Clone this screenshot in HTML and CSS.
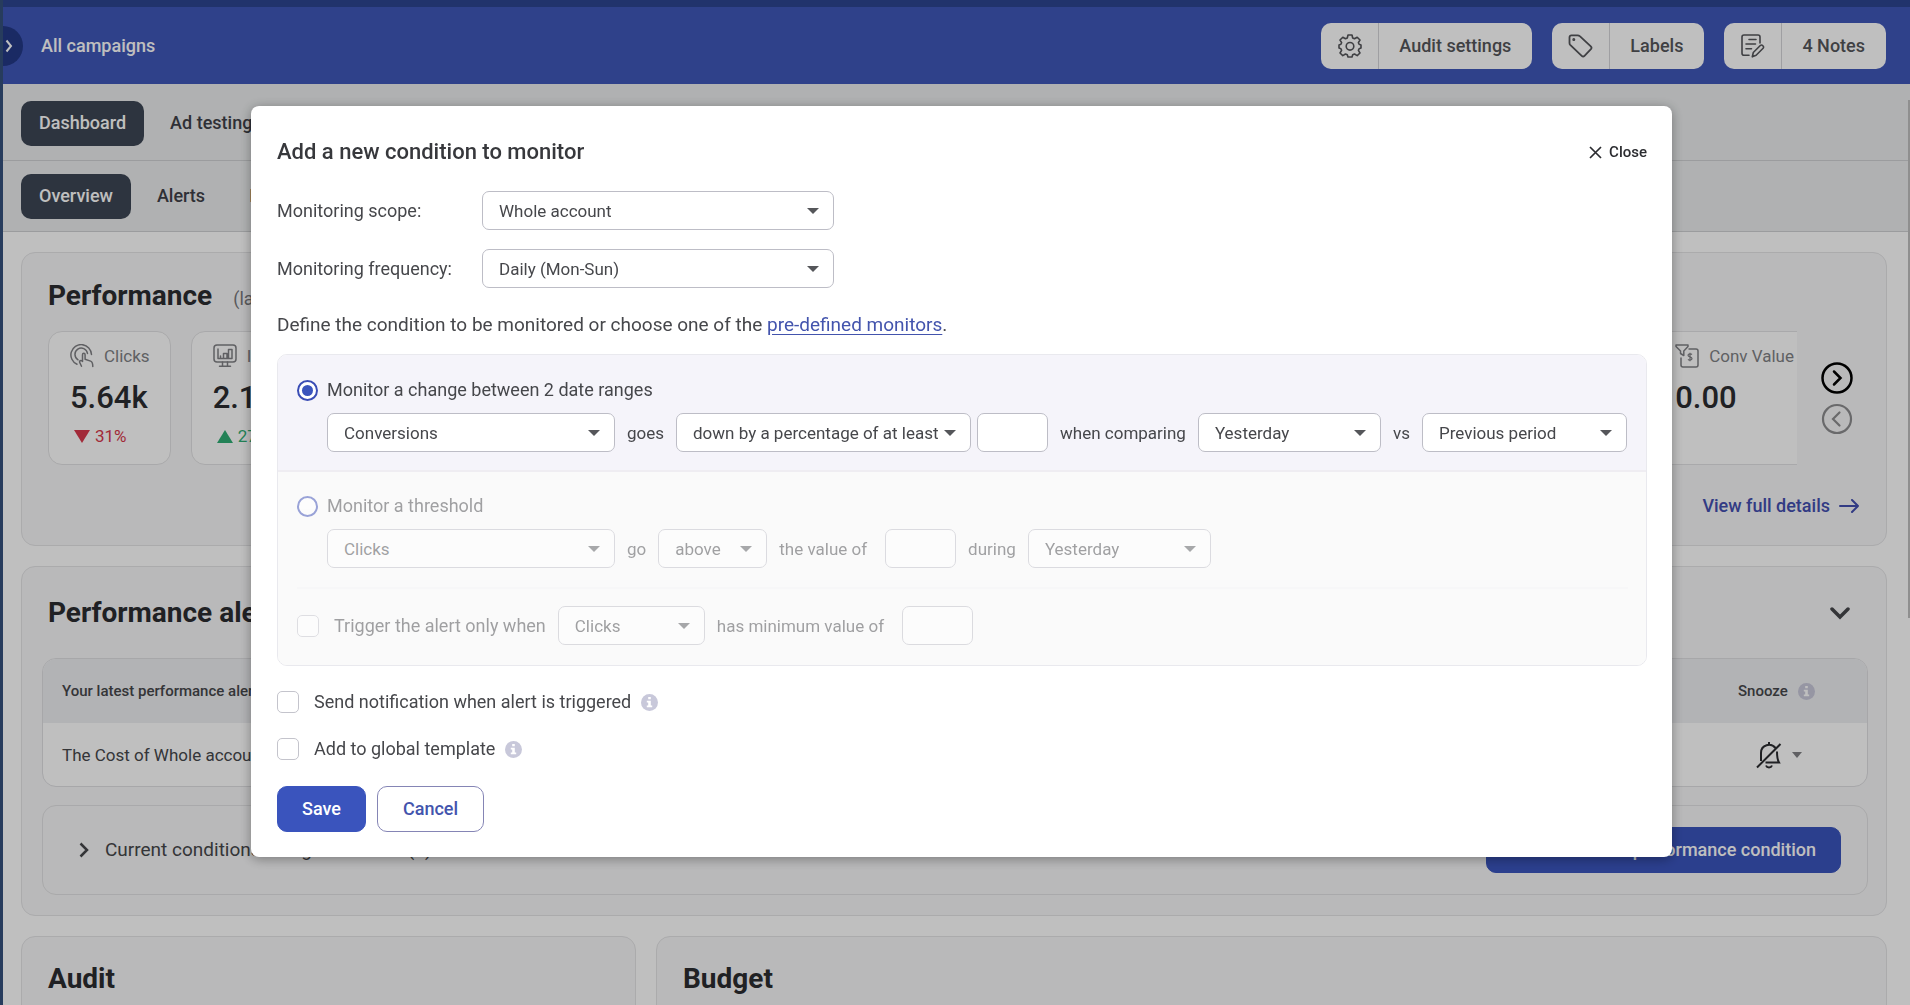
FILE: index.html
```html
<!DOCTYPE html>
<html lang="en">
<head>
<meta charset="utf-8">
<title>All campaigns – Dashboard</title>
<link rel="stylesheet" href="styles.css">
</head>
<body>
<div class="page">
  <header class="topbar">
    <button class="drawer-toggle" aria-label="Open menu">
      <svg width="8" height="14" viewBox="0 0 8 14" fill="none" stroke="currentColor" stroke-width="2"><path d="M1.500 1.500 6 7l-4.500 5.500"/></svg>
    </button>
    <h1 class="topbar-title">All campaigns</h1>
    <div class="topbar-actions">
      <button class="split-button">
        <span class="split-icon">
          <svg width="24" height="24" viewBox="0 0 24 24" fill="none" stroke="currentColor" stroke-width="1.600" stroke-linejoin="round"><path d="M10 1h4l.7 3 1.800.8L19.200 3.200 22 6l-1.600 2.700.7 1.600 1.900.6v3.200l-1.900.6-.7 1.700L22 19l-2.800 2.600-2.700-1.600-1.800.8L14 23h-4l-.7-2.200-1.800-.8-2.700 1.600L2 19l1.600-2.600-.7-1.700-1.900-.6v-3.200l1.900-.6.7-1.600L2 6l2.800-2.800L7.500 4.800 9.300 4z"/><circle cx="12" cy="12.300" r="3.800"/></svg>
        </span>
        <span class="split-label">Audit settings</span>
      </button>
      <button class="split-button">
        <span class="split-icon">
          <svg width="25" height="24" viewBox="0 0 25 24" fill="none" stroke="currentColor" stroke-width="1.800" stroke-linejoin="round"><path d="M1.500 3.200C1.500 2 2.200 1.300 3.400 1.300h6.200c.9 0 1.600.3 2.200.9L22.800 12.400c.9.900.9 1.900.1 2.800l-6.400 6.600c-.9.900-1.900.9-2.800 0L2.200 10.800c-.5-.5-.7-1.100-.7-1.900z"/><circle cx="5.800" cy="5.600" r=".6" fill="currentColor"/></svg>
        </span>
        <span class="split-label">Labels</span>
      </button>
      <button class="split-button">
        <span class="split-icon">
          <svg width="24" height="24" viewBox="0 0 24 24" fill="none" stroke="currentColor" stroke-width="1.600" stroke-linejoin="round" stroke-linecap="round"><path d="M8 21.200H3c-1.200 0-2-.8-2-2V3c0-1.200.8-2 2-2h14c1.200 0 2 .8 2 2v6M8 5.500h7M5 10h9.500M5 14.800h5.500M11.300 22.800l1-4.300 7-7c1.700-1.400 4.200 1 2.800 2.800l-7 7z"/></svg>
        </span>
        <span class="split-label">4 Notes</span>
      </button>
    </div>
  </header>

  <nav class="tabs tabs-main" aria-label="Main">
    <a class="tab tab-active" href="#dashboard">Dashboard</a>
    <a class="tab" href="#testing">Ad testing</a>
  </nav>
  <nav class="tabs tabs-sub" aria-label="Dashboard sections">
    <a class="tab tab-active" href="#overview">Overview</a>
    <a class="tab" href="#alerts">Alerts</a>
    <a class="tab" href="#insights">Insights</a>
  </nav>

  <main class="content">
    <section class="card performance">
      <div class="card-head">
        <h2>Performance</h2>
        <span class="card-note">(last 30 days)</span>
      </div>
      <div class="metrics">
        <div class="metric-list">
          <div class="metric">
            <div class="metric-name">
              <svg width="24" height="24" viewBox="0 0 24 24" fill="none" stroke="currentColor" stroke-width="1.500" stroke-linecap="round" stroke-linejoin="round"><path d="M7 20.300A10.300 10.300 0 1 1 21.500 10.500M8 15.800A6.300 6.300 0 1 1 17.500 9.500M12.500 17.500v-6.800c0-1.900 2.600-1.900 2.600 0v4.600l5.500 1.800c1.600.6 2.200 2.500 2.200 5.400M12.500 17l-1.800-.4c-1.500 0-1.400 1.600-.6 2.600l1.400 3"/></svg>
              Clicks
            </div>
            <div class="metric-value">5.64k</div>
            <div class="metric-change down">31%</div>
          </div>
          <div class="metric">
            <div class="metric-name">
              <svg width="24" height="24" viewBox="0 0 24 24" fill="none" stroke="currentColor" stroke-width="1.500" stroke-linecap="round" stroke-linejoin="round"><rect x="1" y="1" width="22" height="17" rx="3"/><path d="M5 5v9.500M5 14.500h14V5.500h-3.500v9M10.500 14.500v-5h3.500v5M7.500 14.500V12M9.500 18v3.500M14.500 18v3.500M6.500 22.300h11"/></svg>
              Impressions
            </div>
            <div class="metric-value">2.13k</div>
            <div class="metric-change up">27%</div>
          </div>
          <div class="metric metric-fill"></div>
          <div class="metric metric-cut">
            <div class="metric-name">
              <svg width="24" height="24" viewBox="0 0 24 24" fill="none" stroke="currentColor" stroke-width="1.500" stroke-linejoin="round"><path d="M1 1h12v1.500L8.800 7v4.500L5.500 9.500V7L1 2.500zM13.500 5H21c1.200 0 2 .8 2 2v14c0 1.200-.8 2-2 2H8c-1.200 0-2-.8-2-2v-7.500"/><path d="M17 10.500c-1-1-4-1-4 .8 0 2 4 1.200 4 3.200 0 1.900-3 1.900-4 .8M15 8.800v8.500" stroke-width="1.200"/></svg>
              Conv Value
            </div>
            <div class="metric-value">0.00</div>
          </div>
        </div>
        <div class="pager">
          <button class="round-button" aria-label="Next metrics"><svg width="32" height="32" viewBox="0 0 32 32" fill="none" stroke="currentColor" stroke-width="2.500"><circle cx="16" cy="16" r="14.500"/><path d="M13 9.500l6.500 6.500-6.500 6.500" stroke-linecap="round"/></svg></button>
          <button class="round-button" aria-label="Previous metrics" disabled><svg width="32" height="32" viewBox="0 0 32 32" fill="none" stroke="currentColor" stroke-width="2.200"><circle cx="16" cy="16" r="14"/><path d="M18.500 9.500L12 16l6.500 6.500" stroke-linecap="round"/></svg></button>
        </div>
      </div>
      <a class="details-link" href="#details">View full details
        <svg width="20" height="14" viewBox="0 0 20 14" fill="none" stroke="currentColor" stroke-width="2" stroke-linecap="round" stroke-linejoin="round"><path d="M1 7h18M13 1l6 6-6 6"/></svg>
      </a>
    </section>

    <section class="card alerts">
      <div class="card-head alerts-head">
        <h2>Performance alerts</h2>
        <button class="plain-button" aria-label="Collapse"><svg width="20" height="14" viewBox="0 0 20 14" fill="none" stroke="currentColor" stroke-width="3.500" stroke-linecap="round"><path d="M2 3l8 8 8-8"/></svg></button>
      </div>
      <table class="alert-table">
        <thead>
          <tr><th>Your latest performance alerts</th>
            <th class="snooze-col"><span class="snooze">Snooze <svg class="info" width="17" height="17" viewBox="0 0 17 17"><circle cx="8.500" cy="8.500" r="8.500"/><path d="M7.200 3h2.600v2.300H7.200zM5.800 6.800h4v4.700h1.400v1.800H5.800v-1.800h1.400V8.600H5.800z" fill="#fff"/></svg></span></th></tr>
        </thead>
        <tbody>
          <tr><td>The Cost of Whole account</td>
            <td class="snooze-col"><button class="plain-button snooze" aria-label="Snooze alert"><svg width="26" height="28" viewBox="0 0 26 28" fill="none" stroke="currentColor" stroke-width="2"><path d="M13 1v3M19.500 7C15 1.500 5 3.500 5 12v8M9.500 21.500H23c-1.500-2.500-2-4-2-11M1 26.500L24.500 3M10 24.500c1 2.500 5 2.500 6 0"/></svg><span class="caret"></span></button></td></tr>
        </tbody>
      </table>
      <div class="conditions">
        <button class="plain-button conditions-toggle"><svg width="10" height="16" viewBox="0 0 10 16" fill="none" stroke="currentColor" stroke-width="2.500"><path d="M1.500 1.500L8 8l-6.500 6.500"/></svg>Current conditions being monitored (3)</button>
        <button class="button button-primary button-icon"><svg width="22" height="22" viewBox="0 0 22 22" fill="none" stroke="currentColor" stroke-width="2"><path d="M11 4v14M4 11h14"/></svg>Add a new performance condition</button>
      </div>
    </section>

    <div class="lower">
      <section class="card"><h2>Audit</h2></section>
      <section class="card"><h2>Budget</h2></section>
    </div>
  </main>
</div>

<div class="overlay">
  <form class="modal" role="dialog" aria-labelledby="modal-title">
    <div class="modal-head">
      <h2 id="modal-title">Add a new condition to monitor</h2>
      <button type="button" class="plain-button close"><svg width="13" height="13" viewBox="0 0 13 13" fill="none" stroke="currentColor" stroke-width="1.700"><path d="M1 1l11 11M12 1L1 12"/></svg>Close</button>
    </div>
    <div class="field">
      <label for="scope">Monitoring scope:</label>
      <span class="select w-field"><select id="scope"><option>Whole account</option></select></span>
    </div>
    <div class="field">
      <label for="frequency">Monitoring frequency:</label>
      <span class="select w-field"><select id="frequency"><option>Daily (Mon-Sun)</option></select></span>
    </div>
    <p class="intro">Define the condition to be monitored or choose one of the <a href="#predefined">pre-defined monitors</a>.</p>

    <div class="rules">
      <div class="rule rule-on">
        <label class="option"><input type="radio" name="rule" checked>Monitor a change between 2 date ranges</label>
        <div class="rule-row">
          <span class="select w-metric"><select aria-label="Metric"><option>Conversions</option></select></span>
          <span class="word">goes</span>
          <span class="select w-direction"><select aria-label="Direction"><option>down by a percentage of at least</option></select></span>
          <input class="amount amount-near" type="text" aria-label="Percentage">
          <span class="word">when comparing</span>
          <span class="select w-day"><select aria-label="First range"><option>Yesterday</option></select></span>
          <span class="word">vs</span>
          <span class="select w-period"><select aria-label="Second range"><option>Previous period</option></select></span>
        </div>
      </div>
      <div class="rule rule-off">
        <label class="option"><input type="radio" name="rule">Monitor a threshold</label>
        <div class="rule-row">
          <span class="select w-metric"><select aria-label="Threshold metric"><option>Clicks</option></select></span>
          <span class="word">go</span>
          <span class="select w-side"><select aria-label="Side"><option>above</option></select></span>
          <span class="word">the value of</span>
          <input class="amount amount-far" type="text" aria-label="Threshold value">
          <span class="word">during</span>
          <span class="select w-day"><select aria-label="Range"><option>Yesterday</option></select></span>
        </div>
        <hr>
        <div class="trigger-row">
          <label class="trigger-label"><input class="check" type="checkbox">Trigger the alert only when</label>
          <span class="select w-trigger"><select aria-label="Trigger metric"><option>Clicks</option></select></span>
          <span class="word">has minimum value of</span>
          <input class="amount amount-far" type="text" aria-label="Minimum value">
        </div>
      </div>
    </div>

    <div class="check-row">
      <label><input class="check" type="checkbox">Send notification when alert is triggered</label>
      <svg class="info" width="17" height="17" viewBox="0 0 17 17"><circle cx="8.500" cy="8.500" r="8.500"/><path d="M7.200 3h2.600v2.300H7.200zM5.800 6.800h4v4.700h1.400v1.800H5.800v-1.800h1.400V8.600H5.800z" fill="#fff"/></svg>
    </div>
    <div class="check-row">
      <label><input class="check" type="checkbox">Add to global template</label>
      <svg class="info" width="17" height="17" viewBox="0 0 17 17"><circle cx="8.500" cy="8.500" r="8.500"/><path d="M7.200 3h2.600v2.300H7.200zM5.800 6.800h4v4.700h1.400v1.800H5.800v-1.800h1.400V8.600H5.800z" fill="#fff"/></svg>
    </div>
    <div class="modal-actions">
      <button type="submit" class="button button-primary">Save</button>
      <button type="button" class="button button-outline">Cancel</button>
    </div>
  </form>
</div>
</body>
</html>
```

FILE: styles.css
```css
* { box-sizing: border-box; }

html { overflow: hidden; height: 100%; }

body {
  margin: 0;
  height: 100%;
  overflow: hidden;
  font-family: Roboto, "Liberation Sans", sans-serif;
  font-size: 18px;
  line-height: 22px;
  color: #46474b;
}

h1, h2, p { margin: 0; }

button, input, select { font: inherit; color: inherit; margin: 0; }

button { cursor: pointer; }

svg { display: block; flex: none; }

.plain-button {
  display: flex;
  align-items: center;
  padding: 0;
  border: 0;
  background: none;
}

.page {
  height: 100%;
  overflow: hidden;
  border-left: 3px solid #35507c;
  background: #fff;
}

/* Top bar */
.topbar {
  display: flex;
  align-items: center;
  height: 84px;
  padding: 7px 24px 0 0;
  background: linear-gradient(#2d4590 7px, #3f57b9 7px);
}

.drawer-toggle {
  display: flex;
  align-items: center;
  width: 20px;
  height: 40px;
  padding: 0 0 0 2px;
  border: 0;
  border-radius: 0 20px 20px 0;
  background: #233886;
  color: #fff;
}

.topbar-title {
  margin-left: 18px;
  font-size: 18px;
  font-weight: 500;
  color: #fff;
}

.topbar-actions {
  display: flex;
  gap: 20px;
  margin-left: auto;
}

.split-button {
  display: flex;
  align-items: stretch;
  height: 46px;
  padding: 0;
  border: 0;
  border-radius: 10px;
  background: #fff;
  color: #55565a;
  font-weight: 500;
}

.split-icon {
  display: flex;
  align-items: center;
  justify-content: center;
  width: 58px;
  border-right: 1px solid #d5d5d8;
}

.split-label {
  align-self: center;
  padding: 0 21px 0 20px;
}

/* Tabs */
.tabs {
  display: flex;
  align-items: center;
  gap: 8px;
  padding: 0 18px;
  background: #ebedee;
  border-bottom: 1px solid #cfd1d3;
}

.tabs-main { height: 77px; padding-top: 2px; }
.tabs-sub { height: 71px; }

.tab {
  padding: 11px 18px 12px;
  border-radius: 10px;
  color: #3f4148;
  font-weight: 500;
  text-decoration: none;
}

.tab-active { background: #3d4654; color: #fff; }

/* Cards */
.content {
  display: grid;
  gap: 20px;
  padding: 20px 23px 0 18px;
}

.card {
  border: 1px solid #e4e4e6;
  border-radius: 14px;
  background: #f7f7f8;
}

.card h2 {
  font-size: 28px;
  line-height: 32px;
  font-weight: 700;
  color: #2b2c30;
}

.card-head {
  display: flex;
  align-items: baseline;
  gap: 21px;
}

.card-note { color: #77787c; }

.performance { height: 294px; padding: 27px 26px; }

.metrics {
  display: flex;
  align-items: center;
  margin-top: 19px;
}

.metric-list {
  display: flex;
  flex: 1;
  gap: 20px;
  overflow: hidden;
}

.metric {
  height: 134px;
  padding: 12px 20px 0 21px;
  border: 1px solid #e2e2e4;
  border-radius: 14px;
  background: #fff;
  white-space: nowrap;
}

.metric-fill { flex: 1; }

.metric-cut {
  padding-right: 3px;
  border-right: 0;
  border-radius: 14px 0 0 14px;
}

.metric-name {
  display: flex;
  align-items: center;
  gap: 10px;
  font-size: 17px;
  color: #808185;
}

.metric-value {
  margin-top: 14px;
  font-size: 31px;
  line-height: 32px;
  font-weight: 500;
  color: #2b2c30;
}

.metric-change {
  display: flex;
  align-items: center;
  gap: 5px;
  margin: 11px 0 0 4px;
  font-size: 17px;
}

.metric-change::before {
  content: "";
  border: 8px solid transparent;
  border-width: 0 8px;
}

.down { color: #d8394c; }
.down::before { border-top: 13px solid #d8394c; }
.up { color: #2fae74; }
.up::before { border-bottom: 13px solid #2fae74; }

.pager {
  display: grid;
  gap: 9px;
  margin: 0 7px 0 24px;
}

.round-button {
  padding: 0;
  border: 0;
  background: none;
  color: #000;
}

.round-button:disabled { color: #8d8d8f; }

.details-link {
  display: flex;
  align-items: center;
  gap: 9px;
  width: max-content;
  margin: 30px 1px 0 auto;
  color: #434fb0;
  font-weight: 500;
  text-decoration: none;
}

.alerts { padding: 30px 18px 20px 20px; }

.alerts-head {
  align-items: center;
  justify-content: space-between;
  padding: 0 18px 0 6px;
}

.alert-table {
  width: 100%;
  margin-top: 29px;
  border: 1px solid #dfdfe2;
  border-radius: 14px;
  border-spacing: 0;
  background: #fff;
  text-align: left;
  overflow: hidden;
}

.alert-table th {
  height: 64px;
  padding: 0 19px;
  background: #eeeff2;
  font-size: 15px;
  font-weight: 500;
}

.alert-table td { height: 63px; padding: 0 19px; font-size: 17px; }

.alert-table .snooze-col { width: 148px; }

.snooze { display: flex; align-items: center; gap: 10px; }

td .snooze { margin: 0 0 0 18px; color: #2b2c30; }

.caret {
  border: 5px solid transparent;
  border-top: 6px solid #808185;
  border-bottom: 0;
}

.conditions {
  display: flex;
  align-items: center;
  justify-content: space-between;
  height: 90px;
  margin-top: 18px;
  padding: 0 26px 0 36px;
  border: 1px solid #e2e2e4;
  border-radius: 14px;
}

.conditions-toggle { gap: 16px; font-size: 19px; }

.lower {
  display: grid;
  grid-template-columns: 615px 1fr;
  gap: 20px;
}

.lower .card {
  height: 300px;
  padding: 26px;
}

/* Buttons */
.button {
  height: 46px;
  padding: 0 24px;
  border: 1px solid #3a54bd;
  border-radius: 10px;
  font-weight: 500;
}

.button-primary { background: #3a54bd; color: #fff; }

.button-outline { padding: 0 25px; background: #fff; border-color: #8585b5; color: #4354ad; }

.button-icon { display: flex; align-items: center; gap: 11px; }

/* Modal */
.overlay {
  position: fixed;
  inset: 0;
  padding: 106px 238px 0 251px;
  background: rgba(0, 0, 0, .25);
}

/* Thin page scrollbar */
.overlay::after {
  content: "";
  position: absolute;
  top: 100px;
  right: 0;
  width: 2px;
  height: 518px;
  background: #8f8f8f;
}

.modal {
  padding: 33px 25px 25px 26px;
  border-radius: 8px;
  background: #fff;
  box-shadow: 0 2px 12px rgba(0, 0, 0, .35);
}

.modal-head {
  display: flex;
  align-items: center;
  justify-content: space-between;
  margin-bottom: 26px;
}

.modal-head h2 { font-size: 22px; line-height: 26px; font-weight: 500; color: #37383c; }

.close { gap: 7px; font-size: 15px; font-weight: 500; color: #2b2c30; }

.field {
  display: flex;
  align-items: center;
  margin-bottom: 19px;
}

.field label { width: 205px; }

.select { display: grid; }

.select::after {
  content: "";
  grid-area: 1 / 1;
  align-self: center;
  justify-self: end;
  margin-right: 15px;
  border: 6px solid transparent;
  border-top: 6px solid #55565a;
  border-bottom: 0;
  pointer-events: none;
}

.select select {
  grid-area: 1 / 1;
  width: 100%;
  height: 39px;
  padding: 0 16px;
  border: 1px solid #bdbdc6;
  border-radius: 7px;
  background: #fff;
  appearance: none;
  font-size: 17px;
}

.w-field { width: 352px; }
.w-metric { width: 288px; }
.w-direction { width: 295px; }
.w-day { width: 183px; }
.w-period { width: 205px; }
.w-side { width: 109px; }
.w-trigger { width: 147px; }

.intro { margin: 26px 0 18px; font-size: 19px; }

.intro a { color: #4354ad; text-underline-offset: 3px; }

.rules {
  border: 1px solid #e9e9ee;
  border-radius: 10px;
  overflow: hidden;
}

.rule { padding: 24px 18px 18px 19px; }
.rule-on { background: #f5f4fa; border-bottom: 2px solid #efedf2; }
.rule-off { padding-top: 23px; padding-bottom: 20px; background: #fafafa; }

.rule-off .option,
.rule-off .rule-row,
.rule-off .trigger-row { opacity: .5; }

.option {
  display: flex;
  align-items: center;
  gap: 9px;
}

.option input {
  display: grid;
  place-items: center;
  width: 21px;
  height: 21px;
  border: 2px solid #3a4db5;
  border-radius: 50%;
  background: #fff;
  appearance: none;
}

.option input:checked::before {
  content: "";
  width: 11px;
  height: 11px;
  border-radius: 50%;
  background: #3a54bd;
}

.rule-row {
  display: flex;
  align-items: center;
  gap: 12px;
  margin: 12px 0 0 30px;
}

.word { font-size: 17px; white-space: nowrap; }

.amount {
  width: 71px;
  height: 39px;
  border: 1px solid #bdbdc6;
  border-radius: 7px;
  background: #fff;
}

.amount-near { margin-left: -6px; }
.amount-far { margin-left: 6px; }

hr { width: 100%; height: 2px; margin: 19px 0 17px; border: 0; background: #f7f7f8; }

.trigger-row {
  display: flex;
  align-items: center;
  gap: 12px;
}

.trigger-label,
.check-row label {
  display: flex;
  align-items: center;
  gap: 15px;
}

.check {
  width: 22px;
  height: 22px;
  border: 1px solid #c4c4cc;
  border-radius: 5px;
  background: #fff;
  appearance: none;
}

.check-row {
  display: flex;
  align-items: center;
  gap: 10px;
  margin-top: 25px;
}

.info { fill: #c8c8da; }

.modal-actions {
  display: flex;
  gap: 11px;
  margin-top: 26px;
}
```
